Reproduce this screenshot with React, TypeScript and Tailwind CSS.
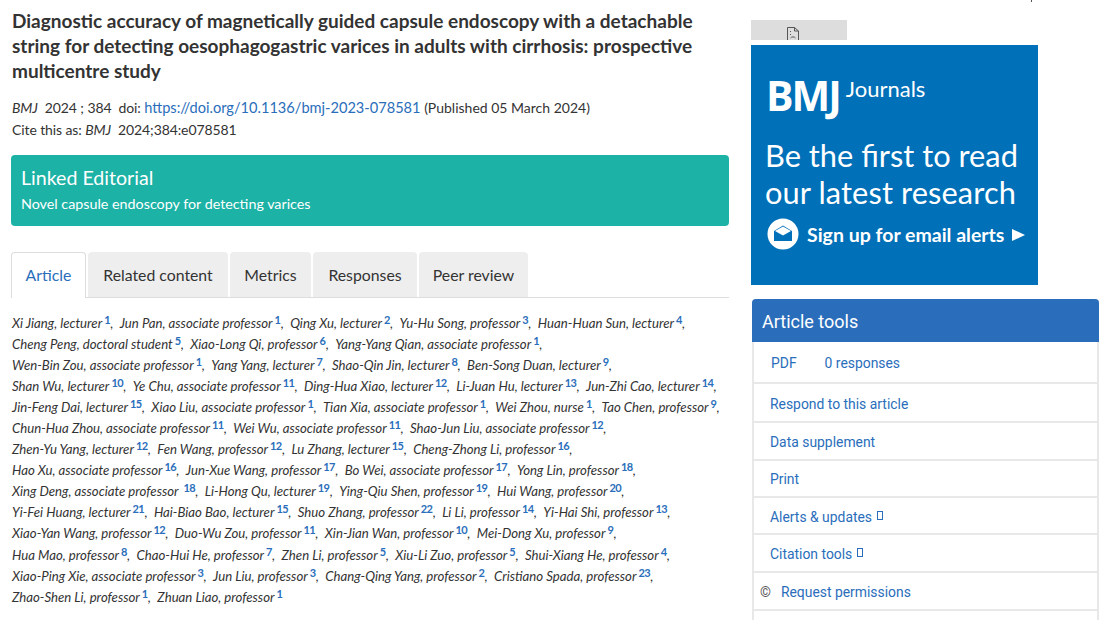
import React from "react";

type Author = [string, string];

const authorRows: Author[][] = [
  [["Xi Jiang, lecturer", "1"], ["Jun Pan, associate professor", "1"], ["Qing Xu, lecturer", "2"], ["Yu-Hu Song, professor", "3"], ["Huan-Huan Sun, lecturer", "4"]],
  [["Cheng Peng, doctoral student", "5"], ["Xiao-Long Qi, professor", "6"], ["Yang-Yang Qian, associate professor", "1"]],
  [["Wen-Bin Zou, associate professor", "1"], ["Yang Yang, lecturer", "7"], ["Shao-Qin Jin, lecturer", "8"], ["Ben-Song Duan, lecturer", "9"]],
  [["Shan Wu, lecturer", "10"], ["Ye Chu, associate professor", "11"], ["Ding-Hua Xiao, lecturer", "12"], ["Li-Juan Hu, lecturer", "13"], ["Jun-Zhi Cao, lecturer", "14"]],
  [["Jin-Feng Dai, lecturer", "15"], ["Xiao Liu, associate professor", "1"], ["Tian Xia, associate professor", "1"], ["Wei Zhou, nurse", "1"], ["Tao Chen, professor", "9"]],
  [["Chun-Hua Zhou, associate professor", "11"], ["Wei Wu, associate professor", "11"], ["Shao-Jun Liu, associate professor", "12"]],
  [["Zhen-Yu Yang, lecturer", "12"], ["Fen Wang, professor", "12"], ["Lu Zhang, lecturer", "15"], ["Cheng-Zhong Li, professor", "16"]],
  [["Hao Xu, associate professor", "16"], ["Jun-Xue Wang, professor", "17"], ["Bo Wei, associate professor", "17"], ["Yong Lin, professor", "18"]],
  [["Xing Deng, associate professor ", "18"], ["Li-Hong Qu, lecturer", "19"], ["Ying-Qiu Shen, professor", "19"], ["Hui Wang, professor", "20"]],
  [["Yi-Fei Huang, lecturer", "21"], ["Hai-Biao Bao, lecturer", "15"], ["Shuo Zhang, professor", "22"], ["Li Li, professor", "14"], ["Yi-Hai Shi, professor", "13"]],
  [["Xiao-Yan Wang, professor", "12"], ["Duo-Wu Zou, professor", "11"], ["Xin-Jian Wan, professor", "10"], ["Mei-Dong Xu, professor", "9"]],
  [["Hua Mao, professor", "8"], ["Chao-Hui He, professor", "7"], ["Zhen Li, professor", "5"], ["Xiu-Li Zuo, professor", "5"], ["Shui-Xiang He, professor", "4"]],
  [["Xiao-Ping Xie, associate professor", "3"], ["Jun Liu, professor", "3"], ["Chang-Qing Yang, professor", "2"], ["Cristiano Spada, professor", "23"]],
  [["Zhao-Shen Li, professor", "1"], ["Zhuan Liao, professor", "1"]],
];

const tabs = [
  { label: "Related content", width: "w-[140px]" },
  { label: "Metrics", width: "w-[81px]" },
  { label: "Responses", width: "w-[104px]" },
  { label: "Peer review", width: "w-[109px]" },
];

const Tofu = () => (
  <span className="ml-[5px] inline-block h-[9px] w-[6px] -translate-y-[2px] border border-[#2a6ebb]" />
);

export default function App() {
  return (
    <div className="relative flex h-[620px] w-[1118px] overflow-hidden bg-white font-['Lato',sans-serif] text-[#333]">
      <span className="absolute top-0 left-[1031px] h-[2px] w-px bg-[#555]" />
      {/* main column */}
      <div className="ml-[11px] flex w-[718px] flex-col">
        <h1 className="mt-[8px] pl-px text-[19px] leading-[25px] font-bold text-[#333]">
          Diagnostic accuracy of magnetically guided capsule endoscopy with a detachable string for detecting oesophagogastric varices in adults with cirrhosis: prospective multicentre study
        </h1>
        <div className="mt-[14px] pl-px text-[14px] leading-[22px]">
          <p className="whitespace-nowrap">
            <span className="tracking-[-0.1px]">
              <em>BMJ</em>&nbsp; 2024 ; 384 &nbsp;doi:{" "}
            </span>
            <a className="text-[14.6px] text-[#2a6ebb]">https://doi.org/10.1136/bmj-2023-078581</a> (Published 05 March 2024)
          </p>
          <p className="tracking-[-0.1px]">
            Cite this as: <em>BMJ</em>&nbsp; 2024;384:e078581
          </p>
        </div>
        <div className="mt-[14px] flex h-[71px] flex-col justify-center rounded-[4px] bg-[#1cb2a6] px-[10px] pb-[3px] text-white">
          <div className="text-[19.6px] leading-[26px]">Linked Editorial</div>
          <div className="mt-[3px] text-[14.3px] leading-[20px]">Novel capsule endoscopy for detecting varices</div>
        </div>
        <div className="mt-[26px] flex h-[46px] gap-[2px] border-b border-[#ddd] text-[15.8px]">
          <div className="h-[46px] w-[75px] rounded-t-[4px] border border-b-0 border-[#ddd] bg-white pt-[10px] text-center text-[#2a6ebb]">
            Article
          </div>
          {tabs.map((t) => (
            <div key={t.label} className={`h-[45px] rounded-t-[4px] bg-[#eee] pt-[11px] text-center ${t.width}`}>
              {t.label}
            </div>
          ))}
        </div>
        <div className="mt-[15px] pl-px text-[13.2px] leading-[21.05px]">
          {authorRows.map((row, i) => (
            <div key={i} className="whitespace-pre">
              {row.map(([name, sup], j) => (
                <span key={j}>
                  <em>{name}</em>
                  <span className="relative -top-[4px] ml-[2px] text-[11px] font-bold tracking-[-0.6px] text-[#2a6ebb]">{sup}</span>
                  {(i < authorRows.length - 1 || j < row.length - 1) && ",  "}
                </span>
              ))}
            </div>
          ))}
        </div>
      </div>

      {/* sidebar */}
      <div className="ml-[22px] flex w-[348px] flex-col">
        <div className="mt-[20px] flex h-[20px] w-[96px] justify-center overflow-hidden bg-[#ddd] pr-[12px]">
          <svg width="12" height="20" viewBox="0 0 12 20" fill="none" stroke="#555" strokeWidth="1" className="mt-[7px] shrink-0">
            <path d="M0.5 0.5H7.5L11.5 4V14H0.5Z" />
            <path d="M7.5 0.5V4H11.5" />
            <path d="M3.5 4V5M3.5 7V8M3.5 11C4.5 9.5 7.5 9.5 8.5 11" />
          </svg>
        </div>
        <div className="mt-[5px] flex h-[240px] w-[287px] flex-col bg-[#0070b8] pl-[14px] text-white">
          <div className="mt-[25px] flex h-[50px] items-start font-['Open_Sans',sans-serif]">
            <span className="ml-px text-[41px] leading-[50px] font-bold tracking-[-2px]">BMJ</span>
            <span className="mt-[6px] ml-[6px] font-['Lato',sans-serif] text-[22px] leading-[26px]">Journals</span>
          </div>
          <div className="mt-[17px] text-[30.8px] leading-[37px] whitespace-nowrap">
            Be the first to read
            <br />
            <span className="tracking-[0.1px]">our latest research</span>
          </div>
          <div className="mt-[7px] flex h-[32px] items-center">
            <svg width="32" height="32" viewBox="0 0 32 32" className="ml-[2px] shrink-0">
              <circle cx="16" cy="16" r="15.5" fill="#fff" />
              <path d="M7 13 L16 7.5 L25 13 L25 23 L7 23 Z" fill="#0070b8" />
              <path d="M8 13 L16 8.5 L24 13 L16 17.5 Z" fill="#fff" />
            </svg>
            <span className="ml-[8px] pt-[1px] text-[19.5px] font-bold whitespace-nowrap">Sign up for email alerts</span>
            <span className="mt-[1px] ml-[8px] h-0 w-0 border-y-[6px] border-l-[13px] border-y-transparent border-l-white" />
          </div>
        </div>
        <div className="mt-[14px] ml-px flex w-[347px] flex-col rounded-t-[4px] border-x-2 border-[#e8e8e8] font-['Roboto',sans-serif] text-[13.9px] text-[#2a6ebb]">
          <div className="-mx-[2px] flex h-[43px] items-center rounded-t-[4px] bg-[#2a6ebb] pt-[1px] pl-[10px] text-[18px] text-white">Article tools</div>
          <div className="flex h-[42px] items-center gap-[28px] border-b-2 border-[#e8e8e8] pt-[3px] pl-[17px]">
            <span>PDF</span>
            <span>0 responses</span>
          </div>
          <div className="flex h-[39px] items-center border-b-2 border-[#e8e8e8] pt-[3px] pl-[16px]">Respond to this article</div>
          <div className="flex h-[38px] items-center border-b-2 border-[#e8e8e8] pt-[2px] pl-[16px]">Data supplement</div>
          <div className="flex h-[37px] items-center border-b-2 border-[#e8e8e8] pt-[2px] pl-[16px]">Print</div>
          <div className="flex h-[37px] items-center border-b-2 border-[#e8e8e8] pt-[3px] pl-[16px]">
            Alerts &amp; updates
            <Tofu />
          </div>
          <div className="flex h-[38px] items-center border-b-2 border-[#e8e8e8] pt-[3px] pl-[16px]">
            Citation tools
            <Tofu />
          </div>
          <div className="flex h-[38px] items-center border-b-2 border-[#e8e8e8] pt-[2px] pl-[6px]">
            <span className="mr-[10px] text-[#555]">©</span>Request permissions
          </div>
          <div className="h-[9px]" />
        </div>
      </div>
    </div>
  );
}
